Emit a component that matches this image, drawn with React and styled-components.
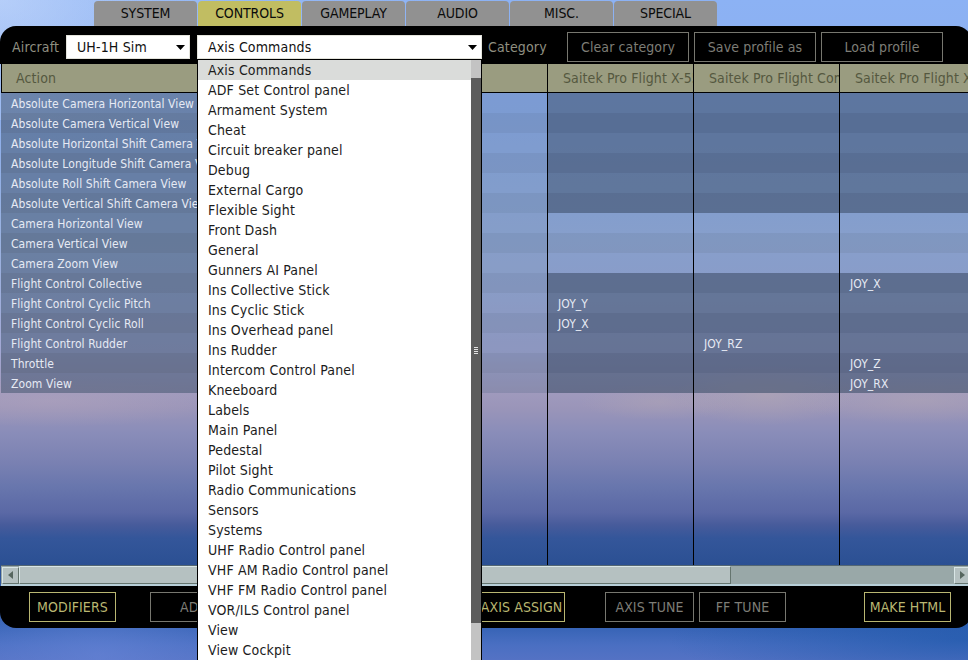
import React from "react";
import styled, { createGlobalStyle, css } from "styled-components";

const GlobalStyle = createGlobalStyle`
  * { box-sizing: border-box; }
  html, body { margin: 0; padding: 0; overflow: hidden; }
  body { font-family: "DejaVu Sans Condensed", "DejaVu Sans", sans-serif; font-stretch: condensed; }
`;

const Screen = styled.div`
  width: 968px;
  height: 660px;
  overflow: hidden;
  position: relative;
  background:
    radial-gradient(ellipse 160px 90px at 0 0, rgba(205, 222, 252, 0.5), transparent),
    radial-gradient(ellipse 300px 50px at 968px 640px, rgba(25, 86, 168, 0.6), transparent),
    radial-gradient(ellipse 170px 90px at 100px 655px, rgba(110, 138, 220, 0.5), transparent),
    radial-gradient(ellipse 180px 26px at 50px 401px, rgba(178, 164, 188, 0.5), transparent),
    radial-gradient(ellipse 90px 30px at 765px 395px, rgba(180, 168, 178, 0.55), transparent),
    radial-gradient(ellipse 80px 18px at 660px 402px, rgba(178, 166, 180, 0.45), transparent),
    radial-gradient(ellipse 130px 24px at 920px 400px, rgba(178, 166, 180, 0.5), transparent),
    linear-gradient(90deg, rgba(190, 212, 250, 0.35), transparent 50%, transparent) 0 0 / 100% 120px no-repeat,
    linear-gradient(180deg,
      #8cb2f4 0, #8caeee 100px, #94b0e4 190px, #9ab2e0 240px, #9faedb 300px,
      #a3a8d4 350px, #a19bbe 388px, #9a95b9 408px, #8a8db9 432px, #7a81b2 462px,
      #6876ad 487px, #5a68a5 513px, #475b9b 525px, #34569a 538px, #2b5093 565px,
      #3462b4 625px, #4a6fc2 645px, #5472c4 660px);
`;

const Tabs = styled.div`
  display: flex;
  gap: 1px;
  height: 26px;
  padding: 1px 0 0 94px;
`;

const Tab = styled.div`
  width: 103px;
  height: 25px;
  line-height: 25px;
  border-radius: 4px 4px 0 0;
  text-align: center;
  font-size: 14px;
  letter-spacing: -0.1px;
  color: #0b0b0b;
  background: ${(p) => (p.$active ? "#c1bd62" : "#919191")};
`;

const Panel = styled.div`
  width: 972px;
  height: 602px;
  display: flex;
  flex-direction: column;
`;

const Toolbar = styled.div`
  display: flex;
  align-items: center;
  height: 38px;
  padding: 4px 0 0 12px;
  background: #000;
  border-radius: 16px 16px 0 0;
`;

const FieldLabel = styled.span`
  width: ${(p) => p.$width}px;
  font-size: 14px;
  letter-spacing: 0.15px;
  color: #8f8f80;
`;

const Select = styled.div`
  width: ${(p) => p.$width}px;
  height: 24px;
  margin-right: ${(p) => p.$gap}px;
  padding: 0 4px 0 10px;
  display: flex;
  align-items: center;
  justify-content: space-between;
  background: #fff;
  border: 1px solid #e4e4dc;
  font-size: 14px;
  letter-spacing: 0.15px;
  color: #111;
`;

const Caret = styled.svg`
  width: 9px;
  height: 5px;
  display: block;
`;

const Button = styled.div`
  width: ${(p) => p.$width}px;
  height: 30px;
  line-height: 29px;
  margin-left: ${(p) => p.$gap || 0}px;
  padding-left: ${(p) => p.$indent || 0}px;
  border: 1px solid ${(p) => (p.$bright ? "#b9b671" : "#77776f")};
  color: ${(p) => (p.$bright ? "#b9b671" : "#7d7d76")};
  font-size: 14px;
  letter-spacing: 0.1px;
  text-align: ${(p) => (p.$indent ? "left" : "center")};
  white-space: nowrap;
  overflow: hidden;
`;

const Table = styled.div`
  display: flex;
  height: 501px;
  padding-left: 1px;
`;

const Column = styled.div`
  width: ${(p) => p.$width}px;
  flex: none;
  border-left: ${(p) => (p.$first ? 0 : 1)}px solid #000;
  overflow: hidden;
`;

const HeaderCell = styled.div`
  height: 29px;
  line-height: 28px;
  padding-left: ${(p) => p.$indent}px;
  border-bottom: 1px solid #000;
  border-left: ${(p) => (p.$edge ? 1 : 0)}px solid #000;
  background: #9a9c80;
  color: #55583f;
  font-size: 14px;
  letter-spacing: 0.1px;
  white-space: nowrap;
  overflow: hidden;
`;

const shades = {
  action: ["rgba(64, 82, 108, 0.52)", "rgba(60, 76, 98, 0.56)"],
  category: ["rgba(75, 98, 130, 0.25)", "rgba(72, 94, 120, 0.32)"],
  empty: ["rgba(70, 90, 130, 0.22)", "rgba(70, 90, 120, 0.3)"],
  blocked: ["rgba(58, 77, 104, 0.58)", "rgba(57, 74, 100, 0.64)"],
};

const Cell = styled.div`
  height: 20px;
  line-height: 22px;
  padding-left: 10px;
  font-size: 12px;
  letter-spacing: 0.08px;
  color: #e6eaf4;
  white-space: nowrap;
  overflow: hidden;
  background: ${(p) => shades[p.$kind][p.$odd ? 1 : 0]};
`;

const ScrollTrack = styled.div`
  display: flex;
  align-items: center;
  height: 21px;
  margin-left: 1px;
  padding-left: 1px;
  background: #99a8a8;
  border-top: 1px solid #546773;
  border-bottom: 2px solid #b8cfd8;
`;

const raised = css`
  background: #b5c1c1;
  border: 1px solid;
  border-color: #d9e6e6 #65756f #65756f #d9e6e6;
`;

const ScrollButton = styled.div`
  ${raised}
  width: 17px;
  height: 17px;
  display: flex;
  align-items: center;
  justify-content: center;
`;

const ScrollThumb = styled.div`
  ${raised}
  width: 712px;
  height: 18px;
  margin-right: 223px;
`;

const Footer = styled.div`
  display: flex;
  align-items: flex-start;
  height: 42px;
  padding: 6px 0 0 29px;
  background: #000;
  border-radius: 0 0 16px 16px;
`;

const Dropdown = styled.div`
  position: absolute;
  left: 197px;
  top: 59px;
  width: 285px;
  height: 602px;
  display: flex;
  background: #fff;
  border: 1px solid #000;
`;

const Options = styled.div`
  flex: 1;
`;

const Option = styled.div`
  height: 20px;
  line-height: 20px;
  padding-left: 10px;
  font-size: 14px;
  letter-spacing: 0.15px;
  color: #1c1c1c;
  background: ${(p) => (p.$selected ? "#dadcda" : "#fff")};
`;

const ListTrack = styled.div`
  width: 10px;
  padding-top: 18px;
  background: #c3c3c3;
`;

const ListThumb = styled.div`
  height: 545px;
  display: flex;
  flex-direction: column;
  align-items: center;
  justify-content: center;
  gap: 1px;
  background: #5d5d5d;
`;

const Grip = styled.div`
  width: 4px;
  height: 1px;
  background: #e2e2e2;
`;

const tabs = ["SYSTEM", "CONTROLS", "GAMEPLAY", "AUDIO", "MISC.", "SPECIAL"];

const rows = [
  ["Absolute Camera Horizontal View"],
  ["Absolute Camera Vertical View"],
  ["Absolute Horizontal Shift Camera View"],
  ["Absolute Longitude Shift Camera View"],
  ["Absolute Roll Shift Camera View"],
  ["Absolute Vertical Shift Camera View"],
  ["Camera Horizontal View"],
  ["Camera Vertical View"],
  ["Camera Zoom View"],
  ["Flight Control Collective", "", "", "JOY_X"],
  ["Flight Control Cyclic Pitch", "JOY_Y"],
  ["Flight Control Cyclic Roll", "JOY_X"],
  ["Flight Control Rudder", "", "JOY_RZ"],
  ["Throttle", "", "", "JOY_Z"],
  ["Zoom View", "", "", "JOY_RX"],
];

const devices = ["Saitek Pro Flight X-55", "Saitek Pro Flight Combat", "Saitek Pro Flight X-55"];

const categories = [
  "Axis Commands", "ADF Set Control panel", "Armament System", "Cheat",
  "Circuit breaker panel", "Debug", "External Cargo", "Flexible Sight",
  "Front Dash", "General", "Gunners AI Panel", "Ins Collective Stick",
  "Ins Cyclic Stick", "Ins Overhead panel", "Ins Rudder",
  "Intercom Control Panel", "Kneeboard", "Labels", "Main Panel", "Pedestal",
  "Pilot Sight", "Radio Communications", "Sensors", "Systems",
  "UHF Radio Control panel", "VHF AM Radio Control panel",
  "VHF FM Radio Control panel", "VOR/ILS Control panel", "View", "View Cockpit",
];

const DownCaret = () => (
  <Caret viewBox="0 0 9 5"><path d="M0 0H9L4.5 5Z" fill="#000" /></Caret>
);

const cellKind = (row) => (row >= 6 && row <= 8 ? "empty" : "blocked");

export default function App() {
  return (
    <Screen>
      <GlobalStyle />
      <Tabs>
        {tabs.map((t) => <Tab key={t} $active={t === "CONTROLS"}>{t}</Tab>)}
      </Tabs>
      <Panel>
        <Toolbar>
          <FieldLabel $width={54}>Aircraft</FieldLabel>
          <Select $width={124} $gap={7}>UH-1H Sim<DownCaret /></Select>
          <Select $width={285} $gap={6}>Axis Commands<DownCaret /></Select>
          <FieldLabel $width={79}>Category</FieldLabel>
          <Button $width={122}>Clear category</Button>
          <Button $width={122} $gap={5}>Save profile as</Button>
          <Button $width={122} $gap={5}>Load profile</Button>
        </Toolbar>
        <Table>
          <Column $width={196} $first>
            <HeaderCell $indent={14} $edge>Action</HeaderCell>
            {rows.map((r, i) => <Cell key={r[0]} $kind="action" $odd={i % 2}>{r[0]}</Cell>)}
          </Column>
          <Column $width={350}>
            <HeaderCell $indent={14} />
            {rows.map((r, i) => <Cell key={r[0]} $kind="category" $odd={i % 2} />)}
          </Column>
          {devices.map((d, c) => (
            <Column key={c} $width={146}>
              <HeaderCell $indent={15}>{d}</HeaderCell>
              {rows.map((r, i) => (
                <Cell key={r[0]} $kind={cellKind(i)} $odd={i % 2}>{r[c + 1]}</Cell>
              ))}
            </Column>
          ))}
        </Table>
        <ScrollTrack>
          <ScrollButton>
            <svg width="5" height="8"><path d="M5 0V8L0 4Z" fill="#56665f" /></svg>
          </ScrollButton>
          <ScrollThumb />
          <ScrollButton>
            <svg width="5" height="8"><path d="M0 0V8L5 4Z" fill="#56665f" /></svg>
          </ScrollButton>
        </ScrollTrack>
        <Footer>
          <Button $bright $width={87}>MODIFIERS</Button>
          <Button $width={87} $gap={34} $indent={29}>ADD</Button>
          <Button $width={87} $gap={241} $bright>AXIS ASSIGN</Button>
          <Button $width={89} $gap={40}>AXIS TUNE</Button>
          <Button $width={87} $gap={5}>FF TUNE</Button>
          <Button $width={87} $gap={78} $bright>MAKE HTML</Button>
        </Footer>
      </Panel>
      <Dropdown>
        <Options>
          {categories.map((c, i) => <Option key={c} $selected={i === 0}>{c}</Option>)}
        </Options>
        <ListTrack>
          <ListThumb><Grip /><Grip /><Grip /><Grip /></ListThumb>
        </ListTrack>
      </Dropdown>
    </Screen>
  );
}
